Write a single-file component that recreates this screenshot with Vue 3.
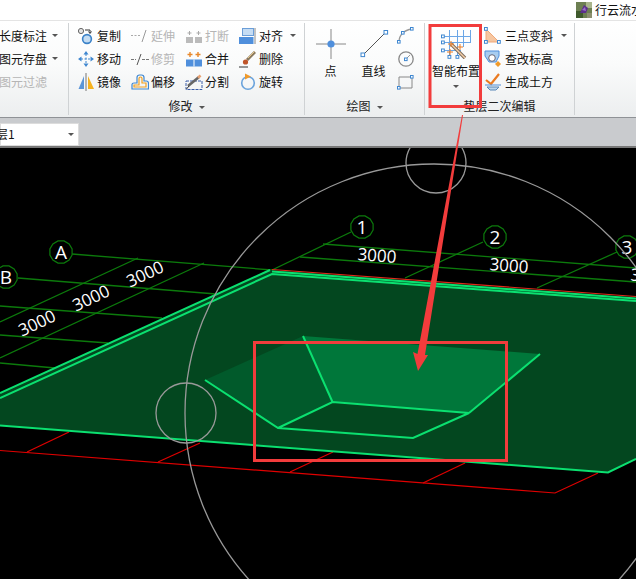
<template>
  <div class="page">
    <header class="titlebar">
      <svg class="app-logo" viewBox="0 0 16 16">
        <rect width="16" height="16" fill="#6d7f52" />
        <rect x="0" y="9" width="7" height="7" fill="#3f5a2c" />
        <rect x="10" y="0" width="6" height="6" fill="#a9b48c" />
        <path d="M4 11 L8 3 L12 6 L10 11 Z" fill="#5b2f8c" />
        <path d="M6 8 L9 5 L10 9 Z" fill="#9a6fc8" />
        <rect x="11" y="11" width="5" height="5" fill="#8c8f70" />
      </svg>
      <span class="app-name">行云流水</span>
    </header>

    <section class="ribbon">
      <div class="group group-first">
        <div class="stack">
          <div class="row">长度标注<i class="caret caret-row"></i></div>
          <div class="row">图元存盘<i class="caret caret-row"></i></div>
          <div class="row off">图元过滤</div>
        </div>
      </div>

      <div class="group group-modify">
        <div class="tool-grid">
          <div v-for="tool in modifyTools" :key="tool.label" class="row tool" :class="{ off: tool.off }">
            <svg class="icon" viewBox="0 0 18 18" v-html="icons[tool.icon]"></svg>
            <span>{{ tool.label }}</span>
            <i v-if="tool.caret" class="caret caret-row"></i>
          </div>
        </div>
        <div class="group-label">修改<i class="caret caret-label"></i></div>
      </div>

      <div class="group group-draw">
        <div class="draw-body">
          <div class="big-tool">
            <svg class="big-icon" viewBox="0 0 30 30" v-html="icons.point"></svg>
            <span>点</span>
          </div>
          <div class="big-tool">
            <svg class="big-icon" viewBox="0 0 30 30" v-html="icons.line"></svg>
            <span>直线</span>
          </div>
          <div class="stack small-stack">
            <div v-for="name in ['arc', 'circle', 'rect']" :key="name" class="row">
              <svg class="icon" viewBox="0 0 18 18" v-html="icons[name]"></svg>
            </div>
          </div>
        </div>
        <div class="group-label">绘图<i class="caret caret-label"></i></div>
      </div>

      <div class="group group-cushion">
        <div class="cushion-body">
          <div class="big-tool smart">
            <svg class="big-icon" viewBox="0 0 30 30" v-html="icons.smart"></svg>
            <span>智能布置</span>
            <i class="caret caret-smart"></i>
          </div>
          <div class="stack">
            <div v-for="tool in cushionTools" :key="tool.label" class="row tool tool-wide">
              <svg class="icon" viewBox="0 0 18 18" v-html="icons[tool.icon]"></svg>
              <span>{{ tool.label }}</span>
              <i v-if="tool.caret" class="caret caret-row"></i>
            </div>
          </div>
        </div>
        <div class="group-label">垫层二次编辑</div>
      </div>
    </section>

    <section class="toolbar">
      <div class="combo">
        <span>层1</span>
        <i class="caret"></i>
      </div>
    </section>

    <svg class="scene" viewBox="0 148 636 431">
      <g class="red-grid">
        <polyline points="0,450.5 555,493 598,473" />
        <line v-for="(l, i) in redTicks" :key="i" :x1="l[0]" :y1="l[1]" :x2="l[2]" :y2="l[3]" />
      </g>

      <g class="axis-lines">
        <line v-for="(l, i) in axisLines" :key="i" :x1="l[0]" :y1="l[1]" :x2="l[2]" :y2="l[3]" />
      </g>

      <polygon class="slab" points="0,393 270,270 636,298 636,459 608,472.5 0,425" />
      <polyline class="red-edge" points="272,269.5 636,296.5" />
      <polygon class="face-left" points="205,380 303,336 332.5,402 278,428" />
      <polygon class="face-main" points="303,336 540,354 469,413 332.5,402" />
      <g class="edges">
        <polyline points="0,393 270,270" />
        <polyline points="0,398 272,274 636,301" />
        <polyline points="272,271.5 636,298.5" />
        <polyline points="0,425.5 608,472.5 636,459" />
        <polyline points="205,380 278,428 413,438 469,413 332.5,402 278,428" />
        <polyline points="303,336 332.5,402" />
        <polyline points="469,413 540,354" />
      </g>

      <g v-for="axis in axes" :key="axis.label">
        <polygon class="axis-badge" :points="badge(axis.x, axis.y)" />
        <text class="axis-text" :x="axis.x" :y="axis.y + 7">{{ axis.label }}</text>
      </g>

      <text
        v-for="(dim, i) in dims"
        :key="i"
        class="dim"
        :transform="`translate(${dim.x} ${dim.y}) rotate(${dim.r})`"
        y="6"
      >3000</text>

      <g class="snap">
        <circle cx="434" cy="413" r="249" />
        <circle cx="186" cy="413" r="30" />
        <circle cx="436" cy="163" r="30" />
      </g>
    </svg>

    <svg class="marks" viewBox="0 0 636 579">
      <rect x="430" y="25.5" width="50.5" height="81" />
      <rect x="254.5" y="342.5" width="252" height="118" />
      <polygon points="462,115 463,115 425,355 428,355 418,371 413,352 417.5,354" />
    </svg>
  </div>
</template>

<script setup>
const icons = {
  copy: '<circle cx="4" cy="4" r="2.6" fill="#e4e4e4" stroke="#666"/><circle cx="10" cy="12" r="4.4" fill="#c4dcf2" stroke="#3b82c8" stroke-width="1.6"/><path d="M8 3h5v3M11.5 4.5L13 6.5L14.5 4.5" fill="none" stroke="#333"/>',
  extend: '<path d="M0 8.5h9" stroke="#aaa" stroke-dasharray="2 1.5" fill="none"/><path d="M11 15L15 3" stroke="#999" fill="none"/>',
  break: '<rect x="1" y="10" width="7" height="6" fill="#bbb"/><rect x="10" y="10" width="7" height="6" fill="#bbb"/><path d="M4.5 4v4M2.5 6h4M13.5 4v4M11.5 6h4" stroke="#aaa" fill="none"/>',
  align: '<rect x="3.5" y="1.5" width="11" height="7" fill="#c5dcf3" stroke="#6b9ed8"/><rect x="0" y="10" width="14.5" height="7" fill="#4f8fdc"/><path d="M16 1v16" stroke="#888"/>',
  move: '<path d="M9 1L11.5 4.5H6.5ZM9 17L6.5 13.5H11.5ZM1 9L4.5 6.5V11.5ZM17 9L13.5 11.5V6.5Z" fill="#3f87d0"/><path d="M9 4v10M4 9h10" stroke="#3f87d0" stroke-dasharray="2 1.5"/>',
  trim: '<path d="M0 9.5h5M11 9.5h7" stroke="#777" fill="none" stroke-dasharray="3 1"/><path d="M6 15L10 4" stroke="#555" fill="none"/>',
  merge: '<path d="M5 2v5M2.5 4.5h5M13 2v5M10.5 4.5h5" stroke="#e8872a" stroke-width="1.4"/><rect x="1" y="9.5" width="16" height="7" fill="#4f8fdc"/><path d="M9 9.5v7" stroke="#fff"/>',
  erase: '<path d="M16 2L8 10" stroke="#8a7a60" stroke-width="3"/><path d="M15.5 1.5L9 8" stroke="#e8c88a"/><circle cx="6.5" cy="12" r="2.6" fill="#c0552a"/><path d="M0 17h9" stroke="#333"/>',
  mirror: '<path d="M7 3V16H1.5Z" fill="#5b95d8"/><path d="M11 3V16H17Z" fill="#f6b21f"/><path d="M9 0v18" stroke="#777"/>',
  offset: '<path d="M1 16V11.5C1 10.5 2 10 3 10H6V4.5C6 3 7 2 8.5 2H10.5C12 2 13 3 13 4.5V8H15.5C16.5 8 17.5 9 17.5 10.5V16Z" fill="none" stroke="#3f87d0" stroke-width="1.2"/><path d="M3 14V12H8V5.5C8 4.5 9 4 9.5 4S11 4.5 11 5.5V10H15V14Z" fill="none" stroke="#f0a020" stroke-width="1.2"/>',
  split: '<path d="M1 8H17V16.5H1Z" fill="none" stroke="#3a5ca8" stroke-dasharray="3 1"/><path d="M3 13L14 4" stroke="#666" stroke-width="2.6"/><path d="M13 4.8L15.6 2.6" stroke="#e8a070" stroke-width="2.6"/><path d="M1.5 16L4 13" stroke="#333"/>',
  rotate: '<circle cx="9" cy="10" r="6.3" fill="none" stroke="#6aa3dc" stroke-width="1.6"/><path d="M6 0.5L12 3.5L6 6.5Z" fill="#f09a2a"/>',
  point: '<path d="M15 0V30M0 15H30" stroke="#888" fill="none"/><circle cx="15" cy="15" r="3.6" fill="#4f8fdc"/>',
  line: '<path d="M4 26L27 3" stroke="#555" fill="none"/><rect x="2" y="24" width="3.6" height="3.6" fill="#fff" stroke="#3f87d0"/><rect x="25" y="1.5" width="3.6" height="3.6" fill="#fff" stroke="#3f87d0"/>',
  arc: '<path d="M2 15C2 8 7 3 15 2" stroke="#999" stroke-width="1.3" fill="none"/><g fill="#fff" stroke="#3f87d0"><rect x="0.5" y="13.5" width="2.6" height="2.6"/><rect x="13.5" y="0.5" width="2.6" height="2.6"/><rect x="4.5" y="4.5" width="2.6" height="2.6"/></g>',
  circle: '<circle cx="9" cy="9" r="7.2" fill="none" stroke="#888" stroke-width="1.3"/><path d="M9 9L13 5" stroke="#999"/><rect x="7.5" y="8" width="2.6" height="2.6" fill="#fff" stroke="#3f87d0"/>',
  rect: '<path d="M2 4H15V15H2Z" fill="none" stroke="#888"/><g fill="#fff" stroke="#3f87d0"><rect x="0.5" y="13.5" width="2.6" height="2.6"/><rect x="13.5" y="2.5" width="2.6" height="2.6"/></g>',
  slope: '<path d="M2 2L15 15H2Z" fill="#f6c6a0" stroke="#f0a878"/><g fill="#fff" stroke="#3f87d0"><rect x="0.5" y="0.5" width="2.8" height="2.8"/><rect x="0.5" y="13.5" width="2.8" height="2.8"/><rect x="13.5" y="13.5" width="2.8" height="2.8"/></g>',
  elev: '<path d="M1 1H15V6L12 12H5L1 6Z" fill="#a8cdf0" stroke="#4f8fdc"/><circle cx="8" cy="8" r="3.3" fill="#fff" stroke="#667"/><path d="M14 11L17 14L14 17L11 14Z" fill="#f09a2a"/>',
  earth: '<path d="M2 7L7 11L15 1" stroke="#ea7a20" stroke-width="2.2" fill="none"/><path d="M1 12H17" stroke="#4f8fdc"/><path d="M3 14H15L12 17H6Z" fill="#bcd6ee" stroke="#5a88b8"/>',
  smart: '<path d="M3 7.5H29.5M3 13.5H29.5M3 21.5H20M8.5 1V26M16.5 1V26M22.5 1V18M29.5 1V14" stroke="#6ba6e6" fill="none"/><g fill="#fff" stroke="#3f87d0"><rect x="0.5" y="6" width="2.8" height="2.8"/><rect x="0.5" y="12" width="2.8" height="2.8"/><rect x="0.5" y="20" width="2.8" height="2.8"/><rect x="7" y="26.5" width="2.8" height="2.8"/><rect x="15" y="26.5" width="2.8" height="2.8"/></g><path d="M10 15L24 29" stroke="#7a6a5a" stroke-width="3.4"/><path d="M10 15L24 29" stroke="#f6cfa8" stroke-width="1.4"/><path d="M10 12v6M7 15h6M19 15v6M16 18h6M9 20v6M6 23h6" stroke="#ea7a20" fill="none"/>',
}

const modifyTools = [
  { label: '复制', icon: 'copy' },
  { label: '延伸', icon: 'extend', off: true },
  { label: '打断', icon: 'break', off: true },
  { label: '对齐', icon: 'align', caret: true },
  { label: '移动', icon: 'move' },
  { label: '修剪', icon: 'trim', off: true },
  { label: '合并', icon: 'merge' },
  { label: '删除', icon: 'erase' },
  { label: '镜像', icon: 'mirror' },
  { label: '偏移', icon: 'offset' },
  { label: '分割', icon: 'split' },
  { label: '旋转', icon: 'rotate' },
]

const cushionTools = [
  { label: '三点变斜', icon: 'slope', caret: true },
  { label: '查改标高', icon: 'elev' },
  { label: '生成土方', icon: 'earth' },
]

const redTicks = [
  [27, 452, 69, 432],
  [158, 462, 200, 443],
  [290, 472, 333, 452],
  [423, 483, 465, 463],
]

const axisLines = [
  [72, 254, 272, 270],
  [18, 278, 216, 294],
  [0, 306, 162, 318],
  [0, 335, 108, 343],
  [0, 363, 55, 368],
  [0, 322, 138, 258],
  [0, 358, 204, 263],
  [351, 232, 270, 271],
  [483, 242, 405, 278],
  [617, 252, 537, 288],
  [323, 244, 636, 268],
  [300, 257, 636, 282],
]

const axes = [
  { label: 'A', x: 61, y: 252 },
  { label: 'B', x: 6, y: 277 },
  { label: '1', x: 362, y: 227 },
  { label: '2', x: 495, y: 237 },
  { label: '3', x: 627, y: 247 },
]

const dims = [
  { x: 145, y: 274, r: -25 },
  { x: 91, y: 298, r: -25 },
  { x: 37, y: 323, r: -25 },
  { x: 377, y: 255.5, r: 4.5 },
  { x: 509, y: 265.5, r: 4.5 },
  { x: 650, y: 276, r: 4.5 },
]

// the grid bubbles are drawn as 12-sided polygons in the software
function badge(cx, cy) {
  const pts = []
  for (let i = 0; i < 12; i++) {
    const a = (Math.PI / 6) * i + Math.PI / 12
    pts.push(`${(cx + 11.5 * Math.cos(a)).toFixed(1)},${(cy + 11.5 * Math.sin(a)).toFixed(1)}`)
  }
  return pts.join(' ')
}
</script>

<style scoped>
.page {
  position: relative;
  width: 636px;
  height: 579px;
  overflow: hidden;
  background: #000;
  font: 12px/16px 'Noto Sans CJK SC', 'Liberation Sans', sans-serif;
  color: #111;
}

.titlebar {
  display: flex;
  align-items: center;
  height: 20px;
  padding-left: 576px;
  background: #fff;
  border-bottom: 1px solid #e4e4e4;
  white-space: nowrap;
}

.app-logo {
  flex: none;
  width: 16px;
  height: 16px;
  margin-right: 3px;
}

.app-name {
  flex: none;
}

.ribbon {
  display: flex;
  height: 96px;
  background: linear-gradient(#fff, #fafbfb 45%, #eceeef);
  border-bottom: 1px solid #8f9296;
}

.group {
  position: relative;
  display: flex;
  flex-direction: column;
  flex: none;
  box-sizing: border-box;
  margin: 2px 0;
  border-right: 1px solid #cfd2d4;
}

.group-first {
  width: 69px;
  padding-top: 1px;
}

.group-first .row {
  margin-left: -1px;
}

.group-modify {
  width: 236px;
  padding: 1px 0 0 8px;
}

.group-draw {
  width: 120px;
  padding: 1px 0 0 4px;
}

.group-cushion {
  width: 150px;
  padding: 1px 0 0 7px;
}

.stack {
  display: flex;
  flex-direction: column;
}

.row {
  display: flex;
  align-items: center;
  height: 23px;
  white-space: nowrap;
}

.off {
  color: #b5b5b5;
}

.tool-grid {
  display: grid;
  grid-template-columns: repeat(4, 54px);
  grid-auto-rows: 23px;
}

.tool {
  gap: 2px;
}

.tool-wide {
  gap: 3px;
}

.icon {
  flex: none;
  width: 18px;
  height: 18px;
}

.caret {
  display: inline-block;
  width: 0;
  height: 0;
  border-left: 3px solid transparent;
  border-right: 3px solid transparent;
  border-top: 3px solid #555;
}

.caret-row {
  margin-left: 5px;
}

.caret-label {
  margin-left: 6px;
  vertical-align: 2px;
}

.group-label {
  margin-top: auto;
  height: 19px;
  line-height: 19px;
  text-align: center;
  color: #222;
}

.group-modify .group-label {
  margin-left: -8px;
}

.group-draw .group-label {
  margin-left: -4px;
}

.group-cushion .group-label {
  margin-left: -7px;
}

.draw-body,
.cushion-body {
  display: flex;
}

.big-tool {
  display: flex;
  flex-direction: column;
  align-items: center;
  width: 43px;
  padding-top: 5px;
  white-space: nowrap;
}

.big-icon {
  width: 30px;
  height: 30px;
  margin-bottom: 4px;
}

.small-stack .row {
  justify-content: center;
  width: 22px;
}

.smart {
  width: 48px;
  margin-right: 4px;
}

.caret-smart {
  margin-top: 6px;
}

.toolbar {
  display: flex;
  align-items: center;
  height: 28px;
  background: #c9cbce;
  border-bottom: 2px solid #777;
}

.combo {
  display: flex;
  align-items: center;
  justify-content: space-between;
  width: 79px;
  height: 23px;
  margin-top: 4px;
  padding-right: 4px;
  box-sizing: border-box;
  background: #fff;
  border: 1px solid #dcdcdc;
}

.combo span {
  margin-left: -5px;
}

.scene {
  display: block;
  width: 636px;
  height: 431px;
  background: #000;
}

.red-grid polyline,
.red-grid line {
  fill: none;
  stroke: #e00000;
  stroke-width: 1.2;
}

.axis-lines line {
  stroke: #0c7a0c;
  stroke-width: 1.3;
}

.slab {
  fill: #03471f;
}

.red-edge {
  fill: none;
  stroke: #e02a1a;
  stroke-width: 1.2;
}

.face-left {
  fill: #015a2b;
}

.face-main {
  fill: #00773a;
}

.edges polyline {
  fill: none;
  stroke: #0be070;
  stroke-width: 2;
}

.axis-badge {
  fill: #000;
  stroke: #0c7a0c;
  stroke-width: 1.2;
}

.axis-text,
.dim {
  font-family: 'Open Sans', 'Liberation Sans', sans-serif;
  fill: #fff;
  text-anchor: middle;
}

.axis-text {
  font-size: 19px;
}

.dim {
  font-size: 17px;
}

.snap circle {
  fill: none;
  stroke: #999;
  stroke-width: 1.3;
}

.marks {
  position: absolute;
  top: 0;
  left: 0;
  width: 636px;
  height: 579px;
  pointer-events: none;
}

.marks rect {
  fill: none;
  stroke: #f23c3c;
  stroke-width: 3;
}

.marks polygon {
  fill: #f23c3c;
}
</style>
